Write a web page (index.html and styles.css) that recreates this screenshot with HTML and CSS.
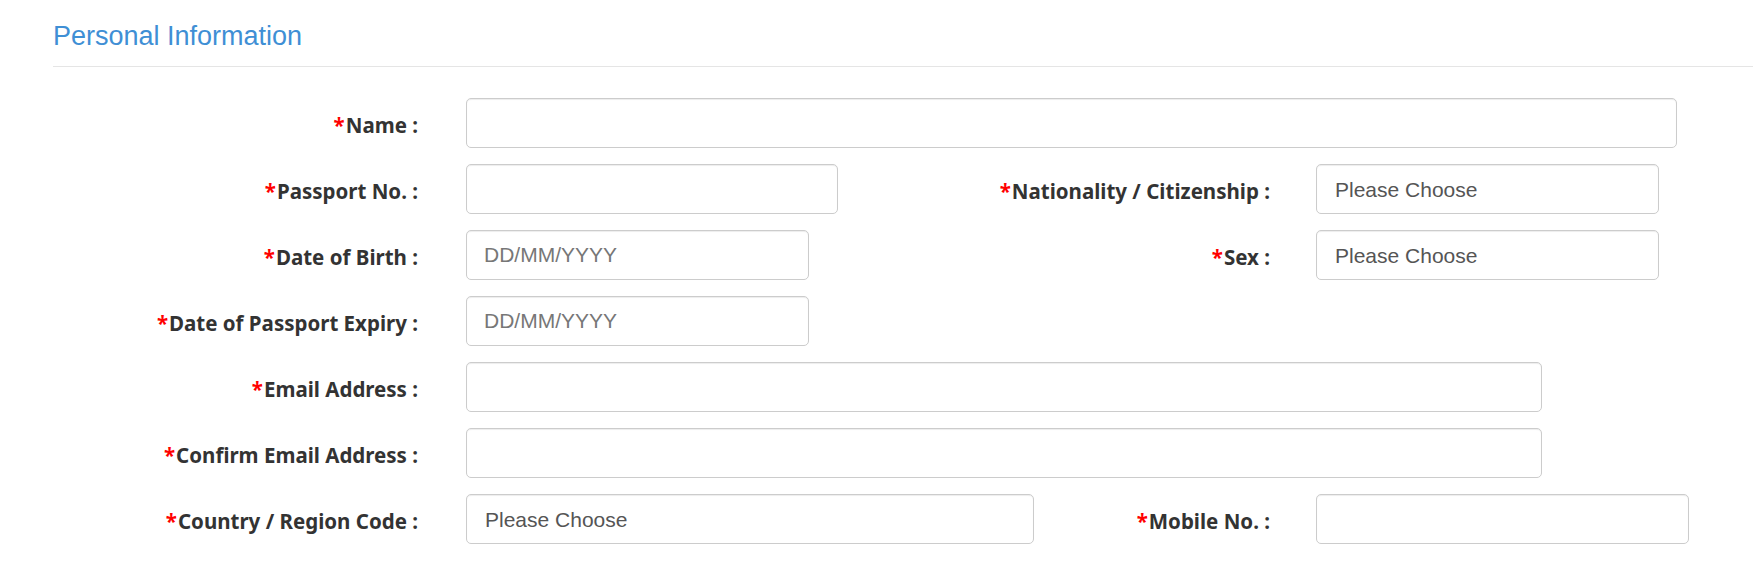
FILE: index.html
```html
<!DOCTYPE html>
<html lang="en">
<head>
<meta charset="utf-8">
<title>Personal Information</title>
<link rel="stylesheet" href="styles.css">
</head>
<body>
<section class="panel">
  <h2 class="panel-title">Personal Information</h2>
  <form class="form-grid">
    <label class="lbl"><span class="req">*</span>Name :</label>
    <div class="field span-3"><input class="ctrl w-name" type="text"></div>

    <label class="lbl"><span class="req">*</span>Passport No. :</label>
    <div class="field"><input class="ctrl w-372" type="text"></div>
    <label class="lbl lbl-right"><span class="req">*</span>Nationality / Citizenship :</label>
    <div class="field"><select class="ctrl sel w-343"><option>Please Choose</option></select></div>

    <label class="lbl"><span class="req">*</span>Date of Birth :</label>
    <div class="field"><input class="ctrl w-343" type="text" placeholder="DD/MM/YYYY"></div>
    <label class="lbl lbl-right"><span class="req">*</span>Sex :</label>
    <div class="field"><select class="ctrl sel w-343"><option>Please Choose</option></select></div>

    <label class="lbl"><span class="req">*</span>Date of Passport Expiry :</label>
    <div class="field span-3"><input class="ctrl w-343" type="text" placeholder="DD/MM/YYYY"></div>

    <label class="lbl"><span class="req">*</span>Email Address :</label>
    <div class="field span-3"><input class="ctrl w-email" type="text"></div>

    <label class="lbl"><span class="req">*</span>Confirm Email Address :</label>
    <div class="field span-3"><input class="ctrl w-email" type="text"></div>

    <label class="lbl"><span class="req">*</span>Country / Region Code :</label>
    <div class="field"><select class="ctrl sel w-country"><option>Please Choose</option></select></div>
    <label class="lbl lbl-right"><span class="req">*</span>Mobile No. :</label>
    <div class="field"><input class="ctrl w-373" type="text"></div>
  </form>
</section>
</body>
</html>
```

FILE: styles.css
```css
html, body {
  margin: 0;
  padding: 0;
  background: #ffffff;
}

.panel {
  padding-top: 21px;
}

.panel-title {
  margin: 0 0 0 53px;
  padding-bottom: 15px;
  border-bottom: 1px solid #e5e5e5;
  font-family: "Liberation Sans", Arial, sans-serif;
  font-weight: normal;
  font-size: 27px;
  line-height: 30px;
  color: #3f8fd5;
}

.form-grid {
  display: grid;
  grid-template-columns: 413px 372px 478px 373px;
  grid-auto-rows: 50px;
  row-gap: 16px;
  margin: 31px 0 0 53px;
}

.lbl {
  display: flex;
  align-items: center;
  justify-content: flex-end;
  padding: 3px 48px 0 0;
  font-family: "Noto Sans", "Open Sans", sans-serif;
  font-weight: 700;
  font-size: 20.5px;
  color: #333333;
  white-space: nowrap;
}

.lbl-right {
  padding-right: 46px;
}

.req {
  color: #ff0000;
  margin-right: 1px;
}

.field {
  display: flex;
  align-items: stretch;
}

.span-3 { grid-column: span 3; }

.ctrl {
  flex-shrink: 0;
  box-sizing: border-box;
  height: 50px;
  margin: 0;
  padding: 0 17px;
  border: 1px solid #cccccc;
  border-radius: 5px;
  background: #ffffff;
  box-shadow: inset 0 1px 1px rgba(0, 0, 0, 0.075);
  font-family: "Liberation Sans", Arial, sans-serif;
  font-size: 21px;
  color: #555555;
  outline: none;
}

.ctrl::placeholder {
  color: #777777;
  opacity: 1;
}

.sel {
  -webkit-appearance: none;
  appearance: none;
  padding-left: 18px;
}

.w-name { width: 1211px; }
.w-email { width: 1076px; }
.w-country { width: 568px; }
.w-372 { width: 372px; }
.w-373 { width: 373px; }
.w-343 { width: 343px; }
```
